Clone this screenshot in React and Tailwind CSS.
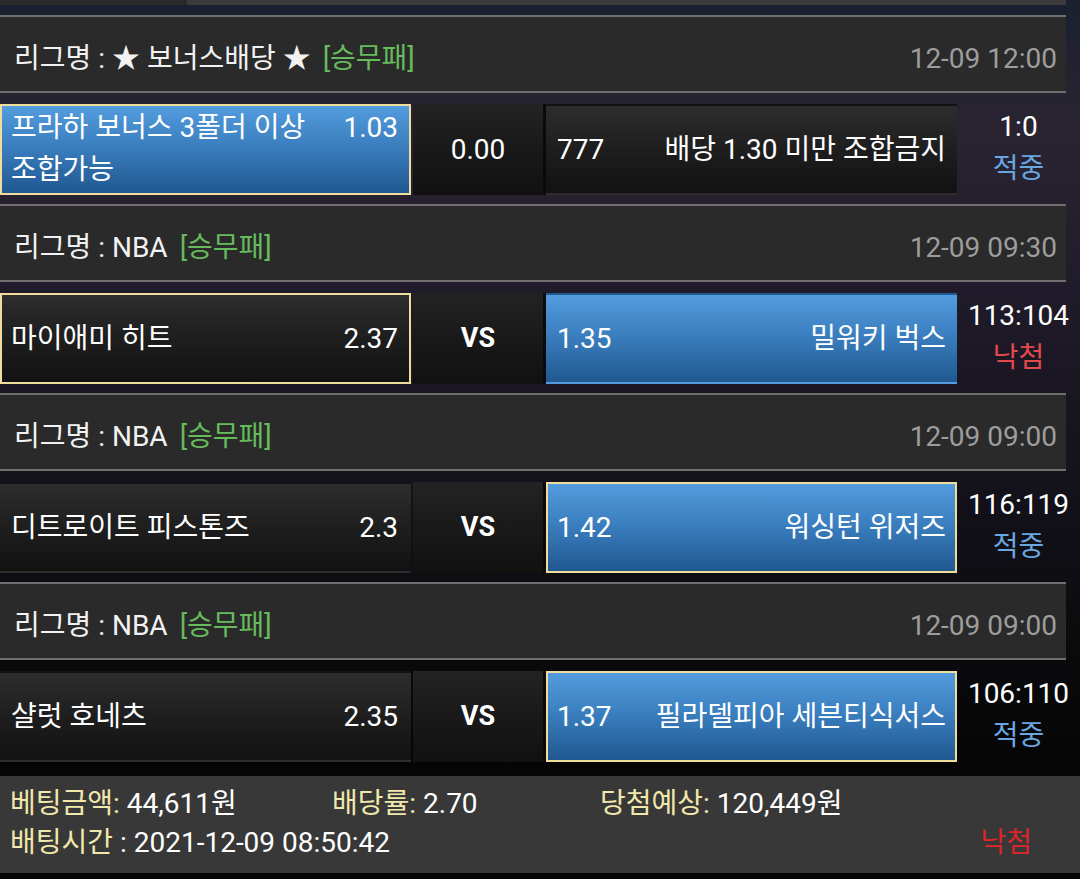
import React from "react";

const matches = [
  {
    league: "★ 보너스배당 ★",
    time: "12-09 12:00",
    home: "프라하 보너스 3폴더 이상 조합가능",
    homeOdds: "1.03",
    mid: "0.00",
    awayOdds: "777",
    away: "배당 1.30 미만 조합금지",
    win: "home",
    pick: "home",
    score: "1:0",
    result: "적중",
  },
  {
    league: "NBA",
    time: "12-09 09:30",
    home: "마이애미 히트",
    homeOdds: "2.37",
    mid: "VS",
    awayOdds: "1.35",
    away: "밀워키 벅스",
    win: "away",
    pick: "home",
    score: "113:104",
    result: "낙첨",
  },
  {
    league: "NBA",
    time: "12-09 09:00",
    home: "디트로이트 피스톤즈",
    homeOdds: "2.3",
    mid: "VS",
    awayOdds: "1.42",
    away: "워싱턴 위저즈",
    win: "away",
    pick: "away",
    score: "116:119",
    result: "적중",
  },
  {
    league: "NBA",
    time: "12-09 09:00",
    home: "샬럿 호네츠",
    homeOdds: "2.35",
    mid: "VS",
    awayOdds: "1.37",
    away: "필라델피아 세븐티식서스",
    win: "away",
    pick: "away",
    score: "106:110",
    result: "적중",
  },
];

const blueBg = "bg-[linear-gradient(180deg,#539cdd_0%,#3b7fc0_45%,#205891_100%)]";
const darkBg = "bg-[linear-gradient(180deg,#2d2d2d_0%,#1e1e1e_50%,#121212_100%)]";

function OddsCell({ win, picked, children }) {
  return (
    <div
      className={`w-[411px] shrink-0 flex items-center px-[9px] border-2 ${win ? blueBg : darkBg} ${
        picked ? "border-[#f0dc9c]" : "border-transparent"
      }`}
    >
      {children}
    </div>
  );
}

function Header({ league, time }) {
  return (
    <div className="w-[1066px] h-[78px] border-y-2 border-[#6f6f6f] bg-[#2a2a2a] flex items-center justify-between pl-[14px] pr-[9px] pt-[10px]">
      <div className="flex items-center text-[#f2f2f2]">
        <span>리그명 : {league}</span>
        <span className="ml-[12px] text-[#66bb5c]">[승무패]</span>
      </div>
      <span className="text-[#9d9d9d]">{time}</span>
    </div>
  );
}

function MatchRow({ m }) {
  const homeWin = m.win === "home";
  const awayWin = m.win === "away";
  const twoLine = m.home.length > 14;
  return (
    <div className="mt-[11px] flex h-[91px]">
      <OddsCell win={homeWin} picked={m.pick === "home"}>
        {twoLine ? (
          <div className="flex w-full items-start justify-between leading-[42px] -mt-[2px]">
            <span className="w-[300px]">{m.home}</span>
            <span className="pr-[2px]">{m.homeOdds}</span>
          </div>
        ) : (
          <div className="flex w-full items-center justify-between">
            <span>{m.home}</span>
            <span className="pr-[2px]">{m.homeOdds}</span>
          </div>
        )}
      </OddsCell>
      <div className="ml-[2px] w-[130px] shrink-0 flex items-center justify-center bg-[linear-gradient(180deg,#232323_0%,#191919_50%,#111111_100%)]">
        <span className={m.mid === "VS" ? "font-bold text-[27px]" : ""}>{m.mid}</span>
      </div>
      <div className="w-[3px] shrink-0 bg-[#0a0a0a]" />
      <OddsCell win={awayWin} picked={m.pick === "away"}>
        <div className="flex w-full items-center justify-between">
          <span>{m.awayOdds}</span>
          <span>{m.away}</span>
        </div>
      </OddsCell>
      <div className="flex-1 flex flex-col items-center justify-center leading-[42px] -mt-[3px]">
        <span>{m.score}</span>
        <span className={m.result === "적중" ? "text-[#6aa6e0]" : "text-[#e4484c]"}>{m.result}</span>
      </div>
    </div>
  );
}

export default function App() {
  return (
    <div className="w-[1080px] h-[879px] overflow-hidden text-white text-[28px] font-['Roboto','Noto_Sans_CJK_KR',sans-serif] bg-[linear-gradient(180deg,#1a2030_0%,#2a2432_14%,#221c2c_30%,#16141e_50%,#0c0c10_70%,#050505_88%,#050505_100%)]">
      <div className="flex h-[5px] w-[1066px]">
        <div className="w-[187px] bg-[#2a2a2a]" />
        <div className="flex-1 bg-[#3b3b3b]" />
      </div>
      <div className="mt-[10px] flex flex-col gap-[9px]">
        {matches.map((m, i) => (
          <div key={i}>
            <Header league={m.league} time={m.time} />
            <MatchRow m={m} />
          </div>
        ))}
      </div>
      <div className="mt-[14px] h-[97px] bg-[#383838] px-[10px] pt-[8px] leading-[39px]">
        <div className="flex">
          <span className="w-[322px]">
            <span className="text-[#f1e8ab]">베팅금액:</span> 44,611원
          </span>
          <span className="w-[268px]">
            <span className="text-[#f1e8ab]">배당률:</span> 2.70
          </span>
          <span>
            <span className="text-[#f1e8ab]">당첨예상:</span> 120,449원
          </span>
        </div>
        <div className="flex justify-between pr-[38px]">
          <span>
            <span className="text-[#f1e8ab]">배팅시간</span> : 2021-12-09 08:50:42
          </span>
          <span className="text-[#d9262b]">낙첨</span>
        </div>
      </div>
    </div>
  );
}
